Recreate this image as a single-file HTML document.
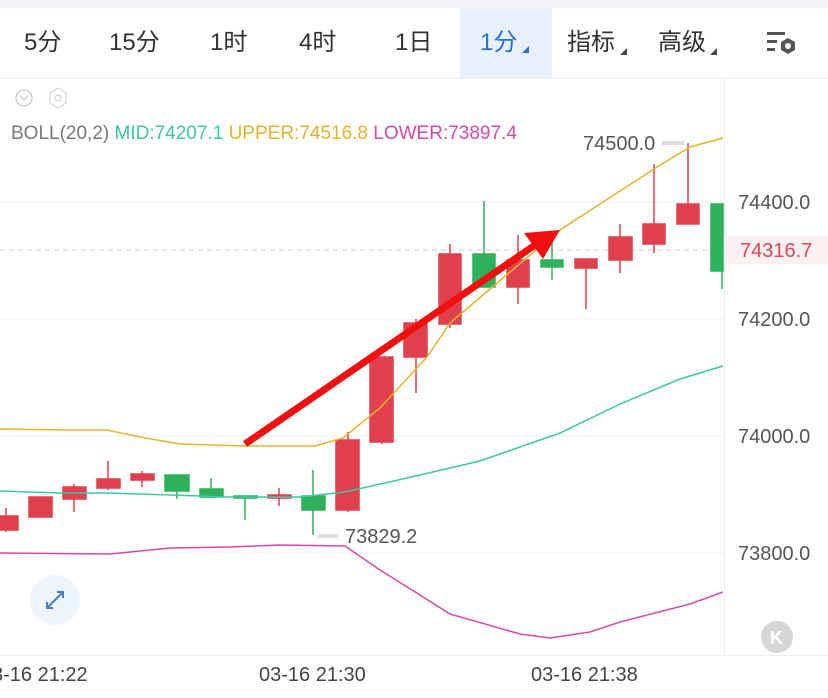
<!DOCTYPE html>
<html><head><meta charset="utf-8"><style>
body{margin:0;width:828px;height:698px;overflow:hidden;background:#fff;font-family:"Liberation Sans","Noto Sans CJK SC",sans-serif;}
.top{position:absolute;left:0;top:0;width:828px;height:8px;background:#f3f4f7}
.tab{position:absolute;top:8px;height:70px;line-height:70px;font-size:24px;color:#333}
</style></head><body>
<div class="top"></div>
<div style="position:absolute;left:460px;top:8px;width:92px;height:70px;background:#e7f0fb"></div>
<div class="tab" style="left:24px">5分</div>
<div class="tab" style="left:109px">15分</div>
<div class="tab" style="left:210px">1时</div>
<div class="tab" style="left:299px">4时</div>
<div class="tab" style="left:395px">1日</div>
<div class="tab" style="left:480px;color:#2a6fd6">1分</div>
<div class="tab" style="left:567px">指标</div>
<div class="tab" style="left:658px">高级</div>
<svg width="828" height="698" style="position:absolute;left:0;top:0" font-family="Liberation Sans, sans-serif">
<polygon points="522,53 529,53 529,46" fill="#2a6fd6"/>
<polygon points="620,55 627,55 627,48" fill="#444"/>
<polygon points="710,55 717,55 717,48" fill="#444"/>
<g fill="#555"><rect x="767" y="32" width="18" height="3"/><rect x="767" y="40" width="10" height="3"/><rect x="767" y="48" width="8" height="3"/></g>
<polygon points="788,38 795,42 795,50 788,54 781,50 781,42" fill="#555"/><circle cx="788" cy="46" r="3" fill="#fff"/>
<line x1="0" y1="78.5" x2="828" y2="78.5" stroke="#eee"/>
<line x1="724.5" y1="78" x2="724.5" y2="655" stroke="#eee"/>
<circle cx="24" cy="98" r="8" fill="none" stroke="#bbb"/><path d="M20,96 L24,100 L28,96" fill="none" stroke="#bbb"/>
<polygon points="58,88 66,93 66,103 58,108 50,103 50,93" fill="none" stroke="#ccc"/><circle cx="58" cy="98" r="3" fill="none" stroke="#ccc"/>
<text x="11" y="139" font-size="19" fill="#777">BOLL(20,2) <tspan fill="#3cc8a0">MID:74207.1</tspan> <tspan fill="#e8b22a">UPPER:74516.8</tspan> <tspan fill="#d84aa3">LOWER:73897.4</tspan></text>
<g stroke="#f2f2f2"><line x1="0" y1="202" x2="724" y2="202"/><line x1="0" y1="319" x2="724" y2="319"/><line x1="0" y1="436" x2="724" y2="436"/><line x1="0" y1="553" x2="724" y2="553"/></g>
<line x1="0" y1="250" x2="724" y2="250" stroke="#ccc" stroke-dasharray="5,4"/>
<rect x="726" y="236" width="102" height="28" fill="#fdf0f1"/>
<g font-size="20" fill="#555"><text x="738" y="209">74400.0</text><text x="738" y="326">74200.0</text><text x="738" y="443">74000.0</text><text x="738" y="560">73800.0</text></g>
<text x="740" y="257" font-size="20" fill="#d9485a">74316.7</text>
<text x="583" y="150" font-size="20" fill="#555">74500.0</text><rect x="662" y="141" width="22" height="4" fill="#ddd"/>
<text x="345" y="543" font-size="20" fill="#555">73829.2</text><rect x="318" y="534" width="20" height="4" fill="#ddd"/>
<g stroke-width="1.5">
<g stroke="#e0404e" fill="#e0404e">
<line x1="6" y1="508" x2="6" y2="532"/><rect x="0" y="516" width="18" height="14"/>
<rect x="29" y="497" width="23" height="20"/>
<line x1="74" y1="484" x2="74" y2="512"/><rect x="63" y="487" width="23" height="12"/>
<line x1="108" y1="461" x2="108" y2="490"/><rect x="97" y="479" width="23" height="9"/>
<line x1="142" y1="471" x2="142" y2="487"/><rect x="131" y="474" width="23" height="6"/>
<line x1="279" y1="488" x2="279" y2="506"/><rect x="268" y="495" width="23" height="3"/>
<line x1="348" y1="432" x2="348" y2="512"/><rect x="336" y="440" width="23" height="70"/>
<line x1="382" y1="430" x2="382" y2="444"/><rect x="370" y="357" width="23" height="85"/>
<line x1="416" y1="319" x2="416" y2="393"/><rect x="404" y="323" width="23" height="34"/>
<line x1="450" y1="244" x2="450" y2="328"/><rect x="439" y="254" width="22" height="70"/>
<line x1="518" y1="235" x2="518" y2="304"/><rect x="507" y="260" width="22" height="27"/>
<line x1="586" y1="259" x2="586" y2="309"/><rect x="575" y="259" width="22" height="9"/>
<line x1="620" y1="224" x2="620" y2="273"/><rect x="609" y="237" width="23" height="23"/>
<line x1="654" y1="164" x2="654" y2="253"/><rect x="643" y="224" width="22" height="20"/>
<line x1="688" y1="143" x2="688" y2="204"/><rect x="677" y="204" width="22" height="20"/>
</g>
<g stroke="#2fb05a" fill="#2fb05a">
<rect x="165" y="475" width="24" height="16"/><line x1="177" y1="491" x2="177" y2="499"/>
<line x1="211" y1="478" x2="211" y2="497"/><rect x="200" y="489" width="23" height="8"/>
<line x1="245" y1="496" x2="245" y2="520"/><rect x="234" y="496" width="23" height="2"/>
<line x1="313" y1="470" x2="313" y2="535"/><rect x="302" y="496" width="23" height="14"/>
<line x1="484" y1="201" x2="484" y2="287"/><rect x="473" y="254" width="22" height="33"/>
<line x1="552" y1="243" x2="552" y2="280"/><rect x="541" y="260" width="22" height="7"/>
<line x1="722" y1="204" x2="722" y2="289"/><rect x="711" y="204" width="12" height="67"/>
</g></g>
<polyline fill="none" stroke="#e8b22a" stroke-width="1.5" points="0,429 70,430 107,430 140,437 180,444 245,446 315,446 343,438 380,408 427,357 450,323 497,283 560,230 657,167 690,147 723,138"/>
<polyline fill="none" stroke="#3cc8a0" stroke-width="1.5" points="0,491 60,493 110,493 170,495 230,497 300,497 345,492 420,475 480,461 560,433 620,404 680,379 723,366"/>
<polyline fill="none" stroke="#d84aa3" stroke-width="1.5" points="0,553 110,554 170,548 230,547 280,545 345,546 380,570 420,595 450,614 520,634 550,638 590,632 620,622 690,604 723,592"/>
<line x1="245" y1="444" x2="538" y2="243" stroke="#f01010" stroke-width="7"/>
<polygon points="560,230 524,233 543,259" fill="#f01010"/>
<line x1="0" y1="655.5" x2="828" y2="655.5" stroke="#eee"/>
<line x1="0" y1="690.5" x2="828" y2="690.5" stroke="#eee"/>
<g font-size="20" fill="#444"><text x="-8" y="681">3-16 21:22</text><text x="259" y="681">03-16 21:30</text><text x="531" y="681">03-16 21:38</text></g>
<circle cx="55" cy="600" r="25" fill="#eef4fb"/>
<g stroke="#4a7fc8" stroke-width="2" fill="none"><path d="M47,608 L63,592 M57,592 L63,592 L63,598 M47,602 L47,608 L53,608"/></g>
<circle cx="777" cy="637" r="16" fill="#d6d6d6"/>
<text x="770" y="644" font-size="18" font-weight="bold" fill="#fff">K</text>
</svg>
</body></html>
